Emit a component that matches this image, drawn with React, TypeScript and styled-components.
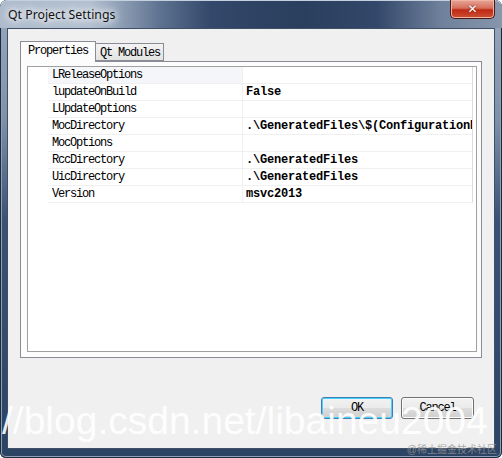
import React from "react";
import styled, {createGlobalStyle} from "styled-components";

const rows: [string, string][] = [
    ["LReleaseOptions", ""],
    ["lupdateOnBuild", "False"],
    ["LUpdateOptions", ""],
    ["MocDirectory", ".\\GeneratedFiles\\$(ConfigurationName)"],
    ["MocOptions", ""],
    ["RccDirectory", ".\\GeneratedFiles"],
    ["UicDirectory", ".\\GeneratedFiles"],
    ["Version", "msvc2013"],
];

const App = () => {
    return (
        <>
            <Global />
            <Window>
                <TitleBar>
                    <Title>Qt Project Settings</Title>
                    <CloseButton>✕</CloseButton>
                </TitleBar>
                <Client>
                    <TabBar>
                        <Tab active>Properties</Tab>
                        <Tab>Qt Modules</Tab>
                    </TabBar>
                    <Pane>
                        <Table>
                            {rows.map(([name, value], i) => (
                                <Row key={name}>
                                    <Gutter />
                                    <NameCell highlight={i === 0}>{name}</NameCell>
                                    <ValueCell>{value}</ValueCell>
                                </Row>
                            ))}
                        </Table>
                    </Pane>
                    <Buttons>
                        <DialogButton focused>OK</DialogButton>
                        <DialogButton>Cancel</DialogButton>
                    </Buttons>
                </Client>
                <Watermark>//blog.csdn.net/libaineu2004</Watermark>
                <Credit>@稀土掘金技术社区</Credit>
            </Window>
        </>
    );
};

export default App;

const Global = createGlobalStyle`
  body {
    margin: 0;
    background: #ffffff;
  }
`;

const Window = styled.div`
  position: relative;
  width: 502px;
  height: 458px;
  box-sizing: border-box;
  padding: 0 7px 9px 7px;
  display: flex;
  flex-direction: column;
  border-radius: 7px 7px 6px 6px;
  overflow: hidden;
  background: linear-gradient(180deg, #9aaabe 0px, #7f91a9 120px, #3a5274 220px, #2c4464 100%);
  box-shadow: inset 0 0 0 1px #1d2b3e, inset 0 0 0 2px #8ea0b8;
`;

const TitleBar = styled.div`
  height: 28px;
  margin: 0 -7px;
  padding: 0 8px;
  display: flex;
  align-items: flex-start;
  justify-content: space-between;
  background: linear-gradient(90deg, #aebbcc 0%, #b3c0d0 18%, #5d7190 32%, #33486a 42%, #2a3e5e 60%, #33476a 75%, #6f819b 88%, #8696ab 100%);
  border-radius: 7px 7px 0 0;
  box-shadow: inset 0 1px 0 #c5d0de;
`;

const Title = styled.div`
  margin-top: 6px;
  font-family: "Noto Sans", "Liberation Sans", sans-serif;
  font-size: 12.3px;
  color: #111;
  text-shadow: 0 0 6px #fff, 0 0 10px #fff, 0 0 14px #e8eef6;
`;

const CloseButton = styled.div`
  margin-right: -1px;
  width: 45px;
  height: 19px;
  box-sizing: border-box;
  border: 1px solid #4c1a14;
  border-top: none;
  border-radius: 0 0 5px 5px;
  background: linear-gradient(180deg, #e8a596 0%, #d66f5c 45%, #c02a14 55%, #cc4f33 100%);
  box-shadow: inset 0 0 0 1px #f0b4a6;
  color: #fff;
  font-family: "DejaVu Sans", sans-serif;
  font-weight: bold;
  font-size: 12px;
  line-height: 18px;
  text-align: center;
  text-shadow: 0 0 2px #5a1a10;
`;

const Client = styled.div`
  flex: 1;
  display: flex;
  flex-direction: column;
  padding: 12px 12px 29px 12px;
  background: #f0f0f0;
  border: 1px solid #3f4f66;
`;

const TabBar = styled.div`
  display: flex;
  align-items: flex-end;
  height: 20px;
  position: relative;
  z-index: 1;
`;

const Tab = styled.div<{ active?: boolean }>`
  box-sizing: border-box;
  height: ${p => (p.active ? "21px" : "18px")};
  margin-bottom: ${p => (p.active ? "-1px" : "0")};
  margin-left: ${p => (p.active ? "0" : "-1px")};
  padding: ${p => (p.active ? "2px 7px 0 7px" : "2px 3px 0 4px")};
  border: 1px solid #898c95;
  border-bottom: ${p => (p.active ? "none" : "1px solid #898c95")};
  background: ${p => (p.active ? "#fcfcfc" : "linear-gradient(180deg, #f3f3f3, #e3e3e3)")};
  position: relative;
  z-index: ${p => (p.active ? 2 : 1)};
  font-family: "Liberation Mono", monospace;
  font-size: 12px;
  letter-spacing: -1.2px;
  line-height: 15px;
  color: #000;
  white-space: nowrap;
`;

const Pane = styled.div`
  width: 462px;
  height: 297px;
  box-sizing: border-box;
  padding: 4px 4px 5px 6px;
  border: 1px solid #898c95;
  background: #fcfcfc;
`;

const Table = styled.div`
  height: 100%;
  box-sizing: border-box;
  border: 1px solid #a0a0a0;
  background: #fff;
  overflow: hidden;
`;

const Row = styled.div`
  display: grid;
  grid-template-columns: 20px 195px 230px;
  height: 17px;
`;

const Gutter = styled.div`
  background: #fff;
`;

const NameCell = styled.div<{ highlight?: boolean }>`
  padding: 1px 0 0 4px;
  background: ${p => (p.highlight ? "#f4f6f9" : "#fff")};
  border-bottom: 1px solid #f0f0f0;
  border-right: 1px solid #f0f0f0;
  font-family: "Liberation Mono", monospace;
  font-size: 12px;
  letter-spacing: -1.2px;
  line-height: 15px;
  color: #000;
  white-space: nowrap;
  overflow: hidden;
`;

const ValueCell = styled.div`
  padding: 1px 0 0 3px;
  border-bottom: 1px solid #f0f0f0;
  border-right: 1px solid #dcdcdc;
  font-family: "Liberation Mono", monospace;
  font-size: 12px;
  font-weight: bold;
  letter-spacing: -0.2px;
  line-height: 15px;
  color: #000;
  white-space: nowrap;
  overflow: hidden;
`;

const Buttons = styled.div`
  margin-top: auto;
  display: flex;
  justify-content: flex-end;
  gap: 8px;
  padding-right: 8px;
`;

const DialogButton = styled.div<{ focused?: boolean }>`
  width: ${p => (p.focused ? "72px" : "73px")};
  height: 22px;
  box-sizing: border-box;
  border: 1px solid ${p => (p.focused ? "#3c7fb1" : "#707070")};
  border-radius: 3px;
  background: linear-gradient(180deg, #f2f2f2 0%, #ebebeb 48%, #dddddd 52%, #cfcfcf 100%);
  box-shadow: inset 0 0 0 1px ${p => (p.focused ? "#48d2ff" : "#fcfcfc")};
  font-family: "Liberation Mono", monospace;
  font-size: 12px;
  letter-spacing: -1.2px;
  line-height: 20px;
  text-align: center;
  color: #000;
`;

const Watermark = styled.div`
  position: absolute;
  left: 2px;
  top: 398px;
  font-family: "Liberation Sans", Arial, sans-serif;
  font-size: 39px;
  line-height: 45px;
  color: rgba(255, 255, 255, 0.92);
  white-space: nowrap;
  pointer-events: none;
`;

const Credit = styled.div`
  position: absolute;
  right: 5px;
  bottom: 2px;
  font-family: "Liberation Sans", "Noto Sans CJK SC", sans-serif;
  font-size: 10px;
  line-height: 12px;
  color: rgba(150, 150, 150, 0.8);
  white-space: nowrap;
  pointer-events: none;
`;
